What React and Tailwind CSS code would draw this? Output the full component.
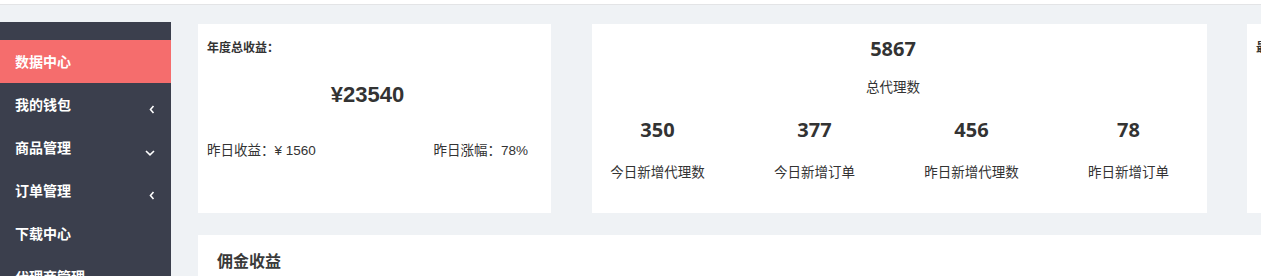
import React from "react";

const CJK = { fontFamily: '"Noto Sans CJK SC", "Noto Sans", sans-serif' };

function ChevLeft() {
  return (
    <svg width="6" height="9" viewBox="0 0 6 9" className="mt-[9px]">
      <polyline points="4.5,1 1.5,4.5 4.5,8" fill="none" stroke="#ffffff" strokeWidth="1.6" />
    </svg>
  );
}
function ChevDown() {
  return (
    <svg width="10" height="6" viewBox="0 0 10 6" className="mt-[10px]">
      <polyline points="1,1 5,4.8 9,1" fill="none" stroke="#ffffff" strokeWidth="1.6" />
    </svg>
  );
}

const menu = [
  { t: "数据中心", active: true },
  { t: "我的钱包", icon: "left" },
  { t: "商品管理", icon: "down" },
  { t: "订单管理", icon: "left" },
  { t: "下载中心" },
  { t: "代理商管理" },
];

function Stat({ n, label }) {
  return (
    <div className="flex flex-col items-center w-[157px]">
      <div className="text-[20px] font-bold text-[#333] leading-[26px]" style={{ fontFamily: '"Open Sans", "Noto Sans CJK SC", sans-serif' }}>{n}</div>
      <div className="text-[13.5px] text-[#333] leading-[20px] mt-[18px]">{label}</div>
    </div>
  );
}

export default function App() {
  return (
    <div className="w-[1261px] h-[276px] overflow-hidden bg-[#eff2f5]" style={CJK}>
      <div className="h-[5px] bg-white border-b border-[#e3e4e6]" />
      <div className="flex">
        <aside className="w-[171px] shrink-0 mt-[17px] h-[260px] bg-[#3b3f4d] pt-[18px]">
          {menu.map((m) => (
            <div
              key={m.t}
              className={`h-[43px] flex items-center justify-between pl-[15px] pr-[16px] text-[14px] font-bold text-white ${m.active ? "bg-[#f56d6d]" : ""}`}
            >
              <span>{m.t}</span>
              {m.icon === "left" && <ChevLeft />}
              {m.icon === "down" && <ChevDown />}
            </div>
          ))}
        </aside>
        <main className="flex-1 min-w-0 pl-[27px] pt-[19px] overflow-hidden">
          <div className="flex">
            <div className="w-[353px] h-[189px] shrink-0 bg-white pl-[9px] pr-[23px] pt-[14px]">
              <div className="text-[12px] font-bold text-[#333] leading-[18px]">年度总收益：</div>
              <div className="mt-[26px] text-center">
                <span className="text-[22px] font-bold text-[#333] leading-[26px]" style={{ fontFamily: '"Liberation Sans", Arial, sans-serif' }}>¥23540</span>
              </div>
              <div className="mt-[31px] flex justify-between text-[13.5px] text-[#333] leading-[20px]">
                <span>
                  昨日收益：<span style={{ fontFamily: '"Liberation Sans", Arial, sans-serif' }}>¥ 1560</span>
                </span>
                <span>
                  昨日涨幅：<span style={{ fontFamily: '"Liberation Sans", Arial, sans-serif' }}>78%</span>
                </span>
              </div>
            </div>
            <div className="w-[615px] h-[189px] shrink-0 ml-[41px] bg-white overflow-hidden">
              <div className="w-[628px] -ml-[13px] pt-[12px] flex flex-col items-center">
                <div className="text-[20px] font-bold text-[#333] leading-[26px]" style={{ fontFamily: '"Open Sans", "Noto Sans CJK SC", sans-serif' }}>5867</div>
                <div className="text-[13.5px] text-[#333] leading-[20px] mt-[14px]">总代理数</div>
                <div className="flex mt-[21px]">
                  <Stat n="350" label="今日新增代理数" />
                  <Stat n="377" label="今日新增订单" />
                  <Stat n="456" label="昨日新增代理数" />
                  <Stat n="78" label="昨日新增订单" />
                </div>
              </div>
            </div>
            <div className="w-[353px] h-[189px] shrink-0 ml-[40px] bg-white pl-[9px] pt-[14px]">
              <div className="text-[12px] font-bold text-[#333] leading-[18px]">最近收益：</div>
            </div>
          </div>
          <div className="mt-[22px] h-[80px] bg-white pl-[19px] pt-[13px]">
            <div className="text-[16px] font-bold text-[#3a3a3a] leading-[24px]">佣金收益</div>
          </div>
        </main>
      </div>
    </div>
  );
}
